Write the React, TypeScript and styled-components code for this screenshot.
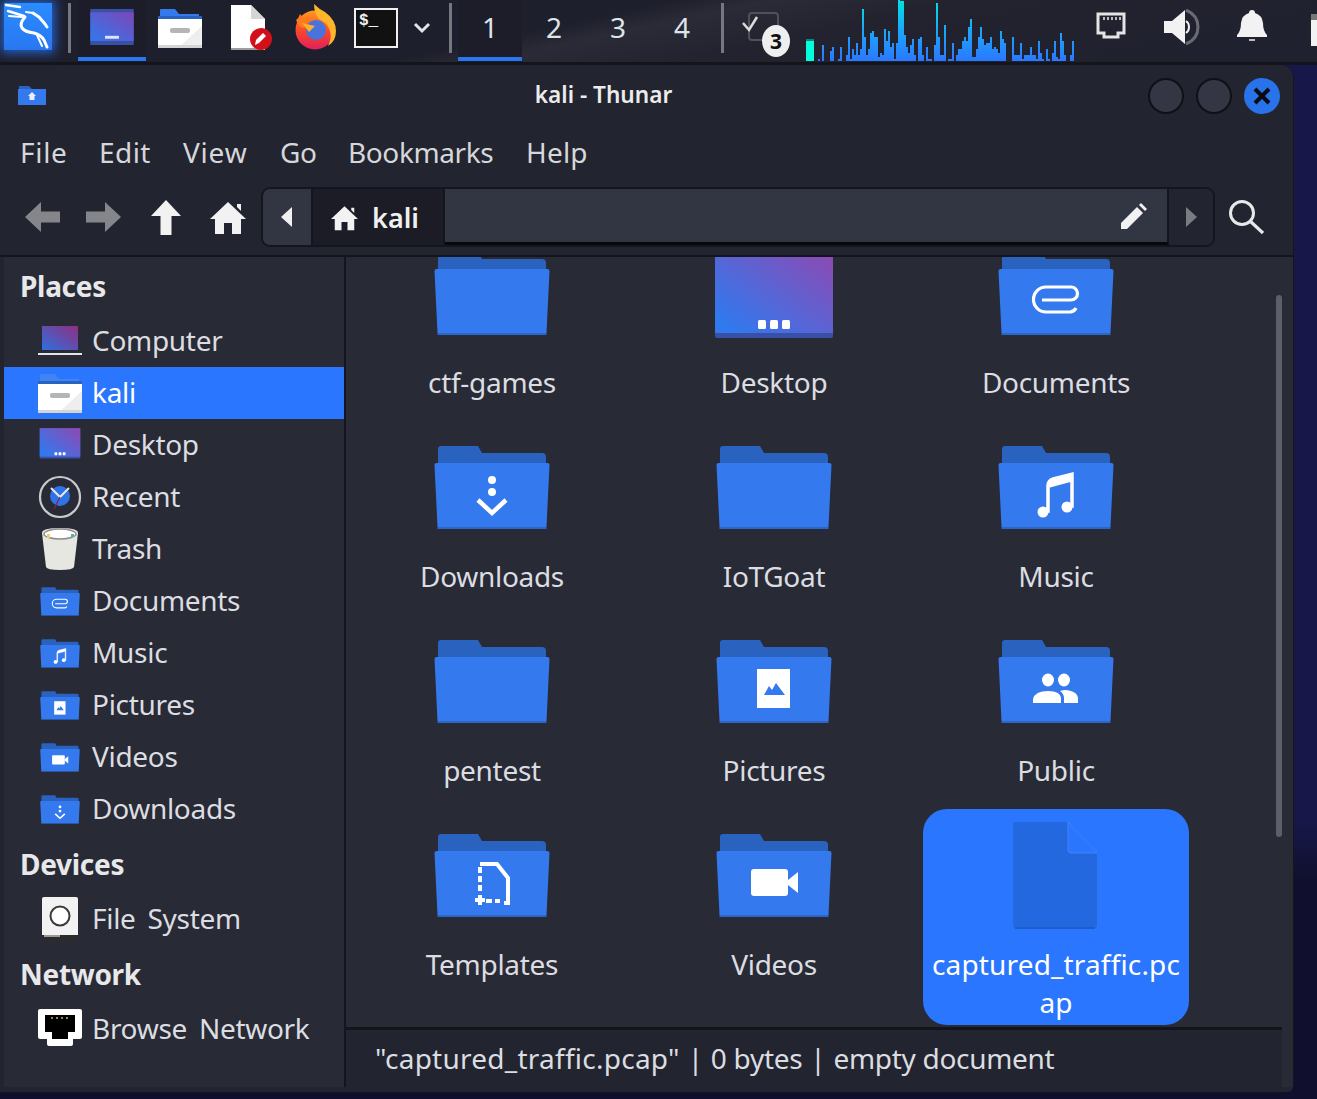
import React from 'react'
import styled, { createGlobalStyle } from 'styled-components'

const FONT = `'Noto Sans', 'Open Sans', sans-serif`

const GlobalStyle = createGlobalStyle`
  html, body {
    margin: 0;
    padding: 0;
    background: #16163e;
  }
  body {
    font-family: ${FONT};
    color: #e4e4e6;
  }
`

// heights of the cpu graph, one per 2px bar, starting at x=818
const GRAPH = [
  2, 0, 16, 0, 0, 0, 10, 14, 0, 0, 2, 14, 0, 0, 6, 24, 2, 12, 6, 18, 6, 12, 52, 24, 6, 12, 28, 30, 24, 24, 4, 8, 6, 32,
  20, 30, 14, 18, 2, 18, 61, 60, 60, 26, 14, 8, 16, 22, 6, 0, 22, 24, 6, 0, 14, 2, 2, 0, 16, 58, 24, 6, 6, 36, 0, 2, 2,
  18, 0, 6, 12, 12, 20, 24, 20, 34, 42, 4, 4, 12, 24, 34, 22, 16, 18, 18, 24, 12, 14, 12, 8, 30, 22, 18, 0, 0, 0, 24, 6,
  6, 6, 18, 2, 6, 6, 6, 14, 6, 6, 2, 20, 8, 2, 0, 12, 2, 0, 8, 20, 4, 2, 28, 20, 6, 0, 0, 6, 20,
]

const Folder = ({ size = 128, glyph }: { size?: number; glyph?: React.ReactNode }) => (
  <svg width={size} height={size} viewBox={size < 128 ? '0 -7 128 128' : '0 0 128 128'}>
    <path d="M10 34V20q0-3 3-3h37l4 7h60q4 0 4 4v8H10z" fill="#2a62c0" />
    <path d="M6.500 36q0-2 2-2h111q2 0 2 2l-3 62H9.500z" fill="#3579ee" />
    <path d="M9.500 98h109v2H9.500z" fill="#2c66c8" />
    {glyph}
  </svg>
)

const Clip = (
  <path
    d="M50 65h29a6.500 6.500 0 0 0 0-13H54a12.500 12.500 0 0 0 0 25h24a7 7 0 0 0 6-4"
    fill="none"
    stroke="#fff"
    strokeWidth="3.200"
  />
)
const DownloadGlyph = (
  <g fill="#fff">
    <circle cx="64" cy="51" r="4" />
    <circle cx="64" cy="63" r="4" />
    <path d="M50 71l14 13 14-13" fill="none" stroke="#fff" strokeWidth="4.500" />
  </g>
)
const MusicGlyph = (
  <g>
    <circle cx="51" cy="83" r="5.500" fill="#fff" />
    <circle cx="75" cy="78" r="5.500" fill="#fff" />
    <path d="M55 83V57q0-6 6-8l20-5v34h-2V52l-22 6v25z" fill="#fff" stroke="#fff" strokeWidth="1.500" />
  </g>
)
const PictureGlyph = (
  <g>
    <rect x="47" y="46" width="33" height="39" fill="#fff" />
    <path d="M54 72l5-9 3 4 4-7 9 12z" fill="#3579ee" />
  </g>
)
const PeopleGlyph = (
  <g fill="#fff">
    <ellipse cx="56" cy="57" rx="6" ry="6.500" />
    <ellipse cx="72" cy="57" rx="6" ry="6.500" />
    <path d="M41 80v-4q2-8 15-8t13 8v4zM72 80v-5q0-4-4-7 3-1 5-1 13 1 13 9v4z" />
  </g>
)
const TemplateGlyph = (
  <g fill="none" stroke="#fff" strokeWidth="4">
    <path d="M52 47h17l11 14v25h-4" />
    <path d="M52 50v26" strokeDasharray="6 3" />
    <path d="M58 84h14" strokeDasharray="6 3" />
    <path d="M52 78v10M47 83h10" />
  </g>
)
const VideoGlyph = (
  <g fill="#fff">
    <rect x="41" y="52" width="37" height="27" rx="3" />
    <path d="M78 63l10-8v21l-10-8z" />
  </g>
)

const DesktopIcon = ({ size = 128, id }: { size?: number; id: string }) => (
  <svg width={size} height={size} viewBox="0 0 128 128">
    <defs>
      <linearGradient id={id} x1="0.05" y1="0.85" x2="0.95" y2="0.05">
        <stop offset="0" stopColor="#3179ee" />
        <stop offset="1" stopColor="#8a4bb5" />
      </linearGradient>
    </defs>
    <rect x="5" y="15" width="118" height="88" rx="2" fill="#3a50a6" />
    <rect x="5" y="15" width="118" height="83" fill={`url(#${id})`} />
    <g fill="#fff">
      <rect x="48" y="85" width="8" height="9" rx="1.500" />
      <rect x="60" y="85" width="8" height="9" rx="1.500" />
      <rect x="72" y="85" width="8" height="9" rx="1.500" />
    </g>
  </svg>
)

const LaptopIcon = () => (
  <svg width="44" height="32" viewBox="0 0 44 32">
    <defs>
      <linearGradient id="laptopFill" x1="0" y1="1" x2="1" y2="0">
        <stop offset="0" stopColor="#2f6fe0" />
        <stop offset="1" stopColor="#8f2f80" />
      </linearGradient>
    </defs>
    <rect x="4" y="1" width="36" height="24" fill="url(#laptopFill)" />
    <rect x="0" y="28" width="44" height="2" fill="#e4e4e6" />
  </svg>
)

const DrawerIcon = ({ w = 44, h = 40, tab = '#3579ee', back = '#2a62c0' }) => (
  <svg width={w} height={h} viewBox="0 0 44 40">
    <path d="M2 12V2q0-1 1-1h14l4 5h20v6z" fill={tab} />
    <rect x="0" y="8" width="44" height="3" fill={back} />
    <rect x="0" y="11" width="44" height="29" fill="#fff" />
    <path d="M20 40l24-22v22z" fill="#eeeeee" />
    <rect x="0" y="37" width="44" height="3" fill="#d4d4d4" />
    <rect x="12" y="20" width="20" height="5" rx="2" fill="#b5b5b5" />
  </svg>
)

const ClockIcon = () => (
  <svg width="44" height="44" viewBox="0 0 44 44">
    <circle cx="22" cy="22" r="20" fill="none" stroke="#c9c9c9" strokeWidth="2.200" />
    <circle cx="22" cy="21" r="10" fill="#2f73e6" />
    <path d="M13 13l9 9 9-9" fill="none" stroke="#e8e8e8" strokeWidth="2" />
    <path d="M22 22l-6 12" stroke="#7a2a40" strokeWidth="1.200" />
  </svg>
)

const TrashIcon = () => (
  <svg width="38" height="44" viewBox="0 0 38 44">
    <path d="M1 6q0-5 18-5t18 5l-4 34q-1 3-14 3T5 40z" fill="#e7e7e2" />
    <ellipse cx="19" cy="7" rx="16" ry="5" fill="#fff" stroke="#8e8e8e" strokeWidth="1.500" />
    <rect x="6" y="7" width="3" height="4" fill="#e8d36a" />
    <rect x="30" y="7" width="3" height="3" fill="#4fb5a8" />
  </svg>
)

const DiskIcon = () => (
  <svg width="36" height="44" viewBox="0 0 36 44">
    <rect x="0" y="0" width="36" height="43" rx="2" fill="#f2f2f2" />
    <circle cx="18" cy="19" r="9.500" fill="#fff" stroke="#3a3a3a" strokeWidth="2" />
    <rect x="0" y="38" width="36" height="6" fill="#2b2b2b" />
    <rect x="2" y="38" width="16" height="2" fill="#999" />
  </svg>
)

const PortIcon = () => (
  <svg width="44" height="40" viewBox="0 0 44 40">
    <path d="M2 0h40q2 0 2 2v26q0 2-2 2h-7v5q0 2-2 2H11q-2 0-2-2v-5H2q-2 0-2-2V2q0-2 2-2z" fill="#fff" />
    <path d="M7 6h30v17h-7v7H14v-7H7z" fill="#000" />
    <path d="M14 8v2M19 8v2M24 8v2M29 8v2" stroke="#c9b26a" strokeWidth="1.500" />
  </svg>
)

const KaliLogo = () => (
  <svg width="48" height="47" viewBox="0 0 48 47">
    <defs>
      <linearGradient id="kaliFill" x1="0" y1="0" x2="0" y2="1">
        <stop offset="0" stopColor="#2a8cff" />
        <stop offset="1" stopColor="#2977f0" />
      </linearGradient>
    </defs>
    <rect width="48" height="47" fill="url(#kaliFill)" />
    <g fill="none" stroke="#fff" strokeWidth="3" strokeLinecap="round" strokeLinejoin="round">
      <path d="M2 2l14 2" strokeWidth="2.400" />
      <path d="M4 8l16 5" strokeWidth="2.400" />
      <path d="M5 13l13 1" strokeWidth="2" />
      <path d="M29 10l6 4 6 7 2 3" />
      <path d="M29 10l-7-1" strokeWidth="2" />
      <path d="M21 14q-6 7-3 11 3 4 12 5 7 2 10 7l3 7" />
      <path d="M33 32l5 11" strokeWidth="2" />
    </g>
  </svg>
)

const FileEditIcon = () => (
  <svg width="42" height="46" viewBox="0 0 42 46">
    <path d="M0 0h20l14 14v31H0z" fill="#fff" />
    <path d="M20 0l14 14H20z" fill="#d5d5d5" />
    <rect x="0" y="43" width="32" height="2" fill="#9d9d9d" />
    <circle cx="30" cy="34" r="11" fill="#d3101a" />
    <path d="M25 39l1-5 7-7 3 3-7 7z" fill="#fff" transform="translate(-1 1)" />
  </svg>
)

const FirefoxIcon = () => (
  <svg width="44" height="46" viewBox="0 0 44 46">
    <defs>
      <linearGradient id="foxBody" x1="0.5" y1="0" x2="0.5" y2="1">
        <stop offset="0" stopColor="#ff9a1f" />
        <stop offset="0.55" stopColor="#f9442d" />
        <stop offset="1" stopColor="#e0205c" />
      </linearGradient>
    </defs>
    <circle cx="21" cy="26" r="19.500" fill="url(#foxBody)" />
    <path d="M20 0q5 5 11 8 11 8 11 19 0 10-8 15 4-8 2-15-3-9-11-12-5-6-5-15z" fill="#ffb52b" />
    <path d="M2 16q3-2 4-6 2 3 5 4 3-2 6 1-5 4-7 9-5-1-8-8z" fill="#ff7a1a" />
    <circle cx="22" cy="26" r="10" fill="#4872dc" />
    <path d="M8 19l13 3-6 6z" fill="#ffb02a" />
  </svg>
)

const ArrowSvg = styled.svg<{ $rotate: number }>`
  transform: rotate(${(p) => p.$rotate}deg);
`

const Arrow = ({ dir, color }: { dir: 'left' | 'right' | 'up'; color: string }) => (
  <ArrowSvg $rotate={dir === 'left' ? -90 : dir === 'right' ? 90 : 0} width="36" height="36" viewBox="0 0 36 36">
    <path d="M18 1L33 17H23.500V36h-11V17H3z" fill={color} />
  </ArrowSvg>
)

const HomeGlyph = ({ size }: { size: number }) => (
  <svg width={size} height={size} viewBox="0 0 36 36">
    <path d="M18 3L36 20h-5v15h-9V24h-8v11H5V20H0z" fill="#f2f2f2" />
    <path d="M27 5h4v7l-4-4z" fill="#f2f2f2" />
  </svg>
)

const Root = styled.div`
  position: relative;
  width: 1317px;
  height: 1099px;
  overflow: hidden;
  background: linear-gradient(to bottom, #17174a 0 820px, #10102e 880px);
`

const Panel = styled.header`
  display: flex;
  height: 62px;
  border-bottom: 3px solid #14151b;
  background: linear-gradient(168deg, #1e1f2c 0 42%, #2a2b36 48%, #22232f 60%, #20212e 100%);
`

const Slot = styled.div<{ $w: number; $active?: boolean; $shade?: boolean }>`
  position: relative;
  flex: 0 0 ${(p) => p.$w}px;
  display: flex;
  align-items: center;
  justify-content: center;
  background: ${(p) => (p.$shade ? '#1c1d29' : 'transparent')};
  &::after {
    content: '';
    position: absolute;
    left: 0;
    right: 0;
    bottom: 1px;
    height: 4px;
    background: ${(p) => (p.$active ? '#2a76f0' : 'transparent')};
  }
`

const Nudge = styled.div<{ $x?: number; $y?: number }>`
  display: flex;
  margin-left: ${(p) => p.$x ?? 0}px;
  margin-top: ${(p) => p.$y ?? 0}px;
`

const LogoWrap = styled.div`
  display: flex;
  margin: -9px 0 0 0;
  box-shadow: 0 0 10px 3px rgba(40, 120, 255, 0.75);
`

const Sep = styled.div<{ $x?: number }>`
  width: 3px;
  height: 50px;
  margin: -6px 0 0 ${(p) => p.$x ?? 0}px;
  background: #77787f;
`

const Workspace = styled.span`
  margin-top: -8px;
  font-size: 28px;
  color: #dfe3ea;
`

const Term = styled.div`
  box-sizing: border-box;
  width: 44px;
  height: 40px;
  margin-top: -6px;
  padding: 0 0 0 3px;
  border: 2px solid #f0f0f0;
  background: #111;
  color: #f0f0f0;
  font: 700 16px/22px 'Liberation Mono', monospace;
`

const Notifier = styled.div`
  position: relative;
  width: 52px;
  height: 46px;
`

const Badge = styled.span`
  position: absolute;
  left: 20px;
  top: 17px;
  width: 28px;
  height: 32px;
  border-radius: 14px / 16px;
  background: #efefef;
  color: #111;
  font: 700 21px/32px ${FONT};
  text-align: center;
`

const Window = styled.main`
  box-sizing: border-box;
  width: 1293px;
  height: 1027px;
  display: flex;
  flex-direction: column;
  background: #22242f;
  border-radius: 0 12px 12px 0;
  box-shadow: 1px 1px 0 #15161c;
`

const TitleBar = styled.div`
  position: relative;
  flex: 0 0 60px;
  display: flex;
  align-items: center;
  justify-content: center;
  padding: 0 7px 0 18px;
`

const TitleIcon = styled.div`
  position: absolute;
  left: 18px;
  top: 20px;
  display: flex;
`

const Title = styled.div`
  margin: -2px 0 0 -97px;
  font-size: 22.6px;
  font-weight: 600;
  color: #ececec;
`

const WinButtons = styled.div`
  position: absolute;
  right: 13px;
  top: 13px;
  display: flex;
  gap: 12px;
`

const WinButton = styled.div<{ $close?: boolean }>`
  box-sizing: border-box;
  width: 36px;
  height: 36px;
  display: flex;
  align-items: center;
  justify-content: center;
  border-radius: 50%;
  background: ${(p) => (p.$close ? '#2873ea' : '#343743')};
  border: 2px solid ${(p) => (p.$close ? '#2873ea' : '#101116')};
`

const MenuBar = styled.nav`
  flex: 0 0 55px;
  display: flex;
  align-items: center;
  padding: 0 0 1px 20px;
  box-sizing: border-box;
  gap: 33px;
  font-size: 28px;
  color: #d6d7da;
`

const MenuItem = styled.span<{ $w: number; $ls: number }>`
  flex: 0 0 ${(p) => p.$w}px;
  min-width: 0;
  letter-spacing: ${(p) => p.$ls}px;
  white-space: nowrap;
`

const Toolbar = styled.div`
  flex: 0 0 75px;
  box-sizing: border-box;
  display: flex;
  padding: 7px 0 8px 11px;
`

const ToolButton = styled.div`
  flex: 0 0 62px;
  display: flex;
  align-items: center;
  justify-content: center;
`

const PathBar = styled.div`
  box-sizing: border-box;
  margin-left: 2px;
  width: 954px;
  height: 60px;
  display: flex;
  border: 2px solid #15161d;
  border-radius: 9px;
  overflow: hidden;
`

const PathArrow = styled.div<{ $w: number; $flat?: boolean; $color: string }>`
  flex: 0 0 ${(p) => p.$w}px;
  display: flex;
  align-items: center;
  justify-content: center;
  background: ${(p) => (p.$flat ? '#22242f' : '#323542')};
  color: ${(p) => p.$color};
`

const PathCrumb = styled.div`
  flex: 0 0 134px;
  box-sizing: border-box;
  display: flex;
  align-items: center;
  gap: 14px;
  padding-left: 18px;
  background: #1b1c25;
  border-left: 2px solid #15161d;
  border-right: 2px solid #15161d;
  font-size: 27px;
  font-weight: 600;
  color: #f0f0f0;
`

const PathEntry = styled.div`
  flex: 1;
  display: flex;
  align-items: center;
  justify-content: flex-end;
  padding-right: 20px;
  background: #323542;
  border-bottom: 3px solid #08080c;
  border-right: 2px solid #15161d;
`

const SearchButton = styled.div`
  flex: 0 0 62px;
  display: flex;
  align-items: center;
  justify-content: center;
`

const Body = styled.div`
  flex: 1;
  min-height: 0;
  display: flex;
  border-top: 2px solid #14151c;
`

const Sidebar = styled.aside`
  flex: 0 0 340px;
  margin-left: 4px;
  background: #282a36;
  border-right: 2px solid #15161d;
`

const SideHeading = styled.div`
  height: 58px;
  padding-left: 16px;
  font-size: 28px;
  letter-spacing: -0.3px;
  line-height: 58px;
  font-weight: 700;
  color: #e8e8ea;
`

const SideRow = styled.div<{ $selected?: boolean }>`
  height: 52px;
  display: flex;
  align-items: center;
  gap: 10px;
  padding-left: 34px;
  font-size: 28px;
  letter-spacing: -0.3px;
  word-spacing: 5px;
  color: ${(p) => (p.$selected ? '#fff' : '#dcdde0')};
  background: ${(p) => (p.$selected ? '#2a76fe' : 'transparent')};
`

const SideLabel = styled.span`
  margin-top: -2px;
`

const SideIcon = styled.div`
  flex: 0 0 44px;
  min-width: 0;
  height: 44px;
  display: flex;
  align-items: center;
  justify-content: center;
`

const Content = styled.section`
  flex: 1;
  min-width: 0;
  display: flex;
  flex-direction: column;
  background: #282a36;
`

const ScrollArea = styled.div`
  position: relative;
  flex: 1;
  min-height: 0;
  overflow: hidden;
`

const Grid = styled.div`
  display: grid;
  grid-template-columns: repeat(3, 282px);
  grid-auto-rows: 194px;
  margin: -30px 0 0 5px;
`

const Item = styled.div<{ $selected?: boolean }>`
  box-sizing: border-box;
  align-self: start;
  margin: 0 8px;
  height: ${(p) => (p.$selected ? '216px' : '194px')};
  padding-top: 8px;
  display: flex;
  flex-direction: column;
  align-items: center;
  border-radius: 24px;
  background: ${(p) => (p.$selected ? '#2a76fe' : 'transparent')};
`

const ItemIcon = styled.div`
  flex: 0 0 128px;
  display: flex;
`

const ItemLabel = styled.div<{ $selected?: boolean }>`
  width: 256px;
  font-size: 28px;
  letter-spacing: ${(p) => (p.$selected ? '0.15px' : '-0.3px')};
  line-height: 38px;
  text-align: center;
  word-break: break-all;
  color: ${(p) => (p.$selected ? '#fff' : '#dcdde0')};
`

const Scrollbar = styled.div`
  position: absolute;
  right: 11px;
  top: 38px;
  width: 6px;
  height: 542px;
  border-radius: 3px;
  background: #5c5e68;
`

const StatusBar = styled.footer`
  flex: 0 0 57px;
  display: flex;
  gap: 8px;
  margin-right: 11px;
  border-top: 3px solid #14151b;
  padding-left: 29px;
  font-size: 28px;
  letter-spacing: -0.3px;
  line-height: 56px;
  white-space: pre;
  color: #dcdde0;
  background: #22242f;
`

const StatusName = styled.span`
  letter-spacing: 0.25px;
`

const BottomEdge = styled.div`
  height: 5px;
  background: #22242f;
  border-radius: 0 0 12px 0;
`

const fileIcon = (
  <svg width="128" height="128" viewBox="0 0 128 128">
    <path d="M24 5h52l29 31v72q0 3-3 3H24q-3 0-3-3V8q0-3 3-3z" fill="#2468e0" />
    <path d="M76 5l29 31H79q-3 0-3-3z" fill="#2a76fe" stroke="#3f84f5" strokeWidth="1" />
    <rect x="23" y="110" width="80" height="2" fill="#1f5ec9" />
  </svg>
)

const places = [
  { name: 'Computer', icon: <LaptopIcon /> },
  { name: 'kali', icon: <DrawerIcon tab="#3f84f5" back="#2a62c0" />, selected: true },
  { name: 'Desktop', icon: <DesktopIcon size={48} id="sideDesktop" /> },
  { name: 'Recent', icon: <ClockIcon /> },
  { name: 'Trash', icon: <TrashIcon /> },
  { name: 'Documents', icon: <Folder size={50} glyph={Clip} /> },
  { name: 'Music', icon: <Folder size={50} glyph={MusicGlyph} /> },
  { name: 'Pictures', icon: <Folder size={50} glyph={PictureGlyph} /> },
  { name: 'Videos', icon: <Folder size={50} glyph={VideoGlyph} /> },
  { name: 'Downloads', icon: <Folder size={50} glyph={DownloadGlyph} /> },
]

const files = [
  { name: 'ctf-games', icon: <Folder /> },
  { name: 'Desktop', icon: <DesktopIcon id="gridDesktop" /> },
  { name: 'Documents', icon: <Folder glyph={Clip} /> },
  { name: 'Downloads', icon: <Folder glyph={DownloadGlyph} /> },
  { name: 'IoTGoat', icon: <Folder /> },
  { name: 'Music', icon: <Folder glyph={MusicGlyph} /> },
  { name: 'pentest', icon: <Folder /> },
  { name: 'Pictures', icon: <Folder glyph={PictureGlyph} /> },
  { name: 'Public', icon: <Folder glyph={PeopleGlyph} /> },
  { name: 'Templates', icon: <Folder glyph={TemplateGlyph} /> },
  { name: 'Videos', icon: <Folder glyph={VideoGlyph} /> },
  { name: 'captured_traffic.pcap', icon: fileIcon, selected: true },
]

const menus = [
  { label: 'File', w: 46, ls: 0.7 },
  { label: 'Edit', w: 51, ls: 0.45 },
  { label: 'View', w: 64, ls: 0.8 },
  { label: 'Go', w: 35, ls: -0.3 },
  { label: 'Bookmarks', w: 145, ls: -0.4 },
  { label: 'Help', w: 61, ls: 0.2 },
]

function CpuGraph() {
  return (
    <svg width="270" height="62" viewBox="806 0 270 62">
      <defs>
        <linearGradient id="cpuBars" gradientUnits="userSpaceOnUse" x1="0" y1="0" x2="0" y2="61">
          <stop offset="0" stopColor="#00e3e0" />
          <stop offset="0.5" stopColor="#1ca6fb" />
          <stop offset="1" stopColor="#2b78ff" />
        </linearGradient>
      </defs>
      <rect x="806" y="39" width="8" height="2" fill="#1c7a78" />
      <rect x="806" y="41" width="8" height="20" fill="#00ffdc" />
      {GRAPH.map((h, i) =>
        h > 0 ? <rect key={i} x={818 + i * 2} y={61 - h} width="2" height={h} fill="url(#cpuBars)" /> : null
      )}
    </svg>
  )
}

export default function App() {
  return (
    <Root>
      <GlobalStyle />
      <Panel>
        <Slot $w={56}>
          <LogoWrap>
            <KaliLogo />
          </LogoWrap>
        </Slot>
        <Slot $w={22}>
          <Sep $x={5} />
        </Slot>
        <Slot $w={68} $active $shade>
          <Nudge $y={-8}>
            <svg width="44" height="36" viewBox="5 15 118 98">
              <defs>
                <linearGradient id="taskDesktop" x1="0" y1="1" x2="1" y2="0">
                  <stop offset="0" stopColor="#3179ee" />
                  <stop offset="1" stopColor="#7c46b8" />
                </linearGradient>
              </defs>
              <rect x="5" y="15" width="118" height="98" fill="#3a50a6" />
              <rect x="5" y="24" width="118" height="78" fill="url(#taskDesktop)" />
              <rect x="45" y="88" width="38" height="8" fill="#dfe3ee" />
            </svg>
          </Nudge>
        </Slot>
        <Slot $w={68}>
          <Nudge $y={-6}>
            <DrawerIcon />
          </Nudge>
        </Slot>
        <Slot $w={69}>
          <Nudge $x={6} $y={-6}>
            <FileEditIcon />
          </Nudge>
        </Slot>
        <Slot $w={64}>
          <Nudge $x={1} $y={-8}>
            <FirefoxIcon />
          </Nudge>
        </Slot>
        <Slot $w={58}>
          <Term>$_</Term>
        </Slot>
        <Slot $w={34}>
          <Nudge $y={-6}>
            <svg width="18" height="12" viewBox="0 0 18 12">
              <path d="M2 2l7 7 7-7" fill="none" stroke="#e4e4e4" strokeWidth="3" />
            </svg>
          </Nudge>
        </Slot>
        <Slot $w={19}>
          <Sep $x={3} />
        </Slot>
        <Slot $w={64} $active $shade>
          <Workspace>1</Workspace>
        </Slot>
        <Slot $w={64}>
          <Workspace>2</Workspace>
        </Slot>
        <Slot $w={64}>
          <Workspace>3</Workspace>
        </Slot>
        <Slot $w={64}>
          <Workspace>4</Workspace>
        </Slot>
        <Slot $w={16}>
          <Sep />
        </Slot>
        <Slot $w={76}>
          <Notifier>
            <svg width="52" height="46" viewBox="0 0 52 46">
              <rect x="7" y="5" width="29" height="27" rx="3" fill="none" stroke="#4f5059" strokeWidth="2" />
              <path d="M1 15l6 7 8-13" fill="none" stroke="#dcdcdc" strokeWidth="2.500" />
            </svg>
            <Badge>3</Badge>
          </Notifier>
        </Slot>
        <Slot $w={270}>
          <CpuGraph />
        </Slot>
        <Slot $w={70}>
          <Nudge $y={-12}>
            <svg width="30" height="27" viewBox="0 0 30 27">
              <path d="M2 2h26v19h-6v4H8v-4H2z" fill="none" stroke="#e4e4e4" strokeWidth="3" />
              <path d="M8 5v3M12 5v3M16 5v3M20 5v3M24 5v3" stroke="#bbb" strokeWidth="2" />
            </svg>
          </Nudge>
        </Slot>
        <Slot $w={71}>
          <Nudge $y={-8}>
            <svg width="36" height="36" viewBox="0 0 36 36">
              <path d="M0 12h8L21 1v34L8 24H0z" fill="#f2f2f2" />
              <path d="M22 1q12 5 12 17t-12 17" fill="none" stroke="#6a6b72" strokeWidth="3" />
              <path d="M22 12q3 2 3 6t-3 6" fill="none" stroke="#f2f2f2" strokeWidth="2" />
            </svg>
          </Nudge>
        </Slot>
        <Slot $w={70}>
          <Nudge $y={-10}>
            <svg width="30" height="32" viewBox="0 0 30 32">
              <path d="M15 0q3 0 3 3 7 2 8 10 0 8 4 12v2H0v-2q4-4 4-12 1-8 8-10 0-3 3-3z" fill="#f2f2f2" />
              <rect x="12" y="29" width="6" height="2" fill="#bbb" />
            </svg>
          </Nudge>
        </Slot>
        <Slot $w={30}>
          <Nudge $x={24} $y={-2}>
            <svg width="12" height="36" viewBox="0 0 12 36">
              <rect x="0" y="2" width="12" height="6" fill="#777" />
              <rect x="0" y="8" width="12" height="26" fill="#f2f2f2" />
            </svg>
          </Nudge>
        </Slot>
      </Panel>
      <Window>
        <TitleBar>
          <TitleIcon>
            <svg width="28" height="20" viewBox="0 0 28 20">
              <path d="M1 6V1h10l3 3h13v2z" fill="#2a62c0" />
              <rect x="0" y="4" width="28" height="16" fill="#3579ee" />
              <path d="M14 7l4 4h-1.500v4h-5v-4H10z" fill="#e8eefc" />
            </svg>
          </TitleIcon>
          <Title>kali - Thunar</Title>
          <WinButtons>
            <WinButton />
            <WinButton />
            <WinButton $close>
              <svg width="20" height="20" viewBox="0 0 20 20">
                <path d="M3 3l14 14M17 3L3 17" stroke="#0a0a14" strokeWidth="4" />
              </svg>
            </WinButton>
          </WinButtons>
        </TitleBar>
        <MenuBar>
          {menus.map((m) => (
            <MenuItem key={m.label} $w={m.w} $ls={m.ls}>
              {m.label}
            </MenuItem>
          ))}
        </MenuBar>
        <Toolbar>
          <ToolButton>
            <Arrow dir="left" color="#85868b" />
          </ToolButton>
          <ToolButton>
            <Arrow dir="right" color="#85868b" />
          </ToolButton>
          <ToolButton>
            <Arrow dir="up" color="#f2f2f2" />
          </ToolButton>
          <ToolButton>
            <HomeGlyph size={36} />
          </ToolButton>
          <PathBar>
            <PathArrow $w={48} $color="#f0f0f0">
              <svg width="12" height="20" viewBox="0 0 12 20">
                <path d="M11 0v20L0 10z" fill="currentColor" />
              </svg>
            </PathArrow>
            <PathCrumb>
              <HomeGlyph size={27} />
              kali
            </PathCrumb>
            <PathEntry>
              <svg width="26" height="26" viewBox="0 0 26 26">
                <path d="M0 26v-6L16 4l6 6L6 26z" fill="#f2f2f2" />
                <path d="M18 2l2-2 6 6-2 2z" fill="#f2f2f2" />
              </svg>
            </PathEntry>
            <PathArrow $w={44} $flat $color="#7b7c82">
              <svg width="12" height="20" viewBox="0 0 12 20">
                <path d="M1 0v20l11-10z" fill="currentColor" />
              </svg>
            </PathArrow>
          </PathBar>
          <SearchButton>
            <svg width="36" height="36" viewBox="0 0 36 36">
              <circle cx="14" cy="14" r="11.500" fill="none" stroke="#e8e8e8" strokeWidth="3" />
              <path d="M22 22l13 12" stroke="#e8e8e8" strokeWidth="3.200" />
            </svg>
          </SearchButton>
        </Toolbar>
        <Body>
          <Sidebar>
            <SideHeading>Places</SideHeading>
            {places.map((p) => (
              <SideRow key={p.name} $selected={p.selected}>
                <SideIcon>{p.icon}</SideIcon>
                <SideLabel>{p.name}</SideLabel>
              </SideRow>
            ))}
            <SideHeading>Devices</SideHeading>
            <SideRow>
              <SideIcon>
                <DiskIcon />
              </SideIcon>
              <SideLabel>File System</SideLabel>
            </SideRow>
            <SideHeading>Network</SideHeading>
            <SideRow>
              <SideIcon>
                <PortIcon />
              </SideIcon>
              <SideLabel>Browse Network</SideLabel>
            </SideRow>
          </Sidebar>
          <Content>
            <ScrollArea>
              <Grid>
                {files.map((f) => (
                  <Item key={f.name} $selected={f.selected}>
                    <ItemIcon>{f.icon}</ItemIcon>
                    <ItemLabel $selected={f.selected}>{f.name}</ItemLabel>
                  </Item>
                ))}
              </Grid>
              <Scrollbar />
            </ScrollArea>
            <StatusBar>
              <StatusName>"captured_traffic.pcap"</StatusName>
              <span>|</span>
              <span>0 bytes</span>
              <span>|</span>
              <span>empty document</span>
            </StatusBar>
          </Content>
        </Body>
        <BottomEdge />
      </Window>
    </Root>
  )
}
